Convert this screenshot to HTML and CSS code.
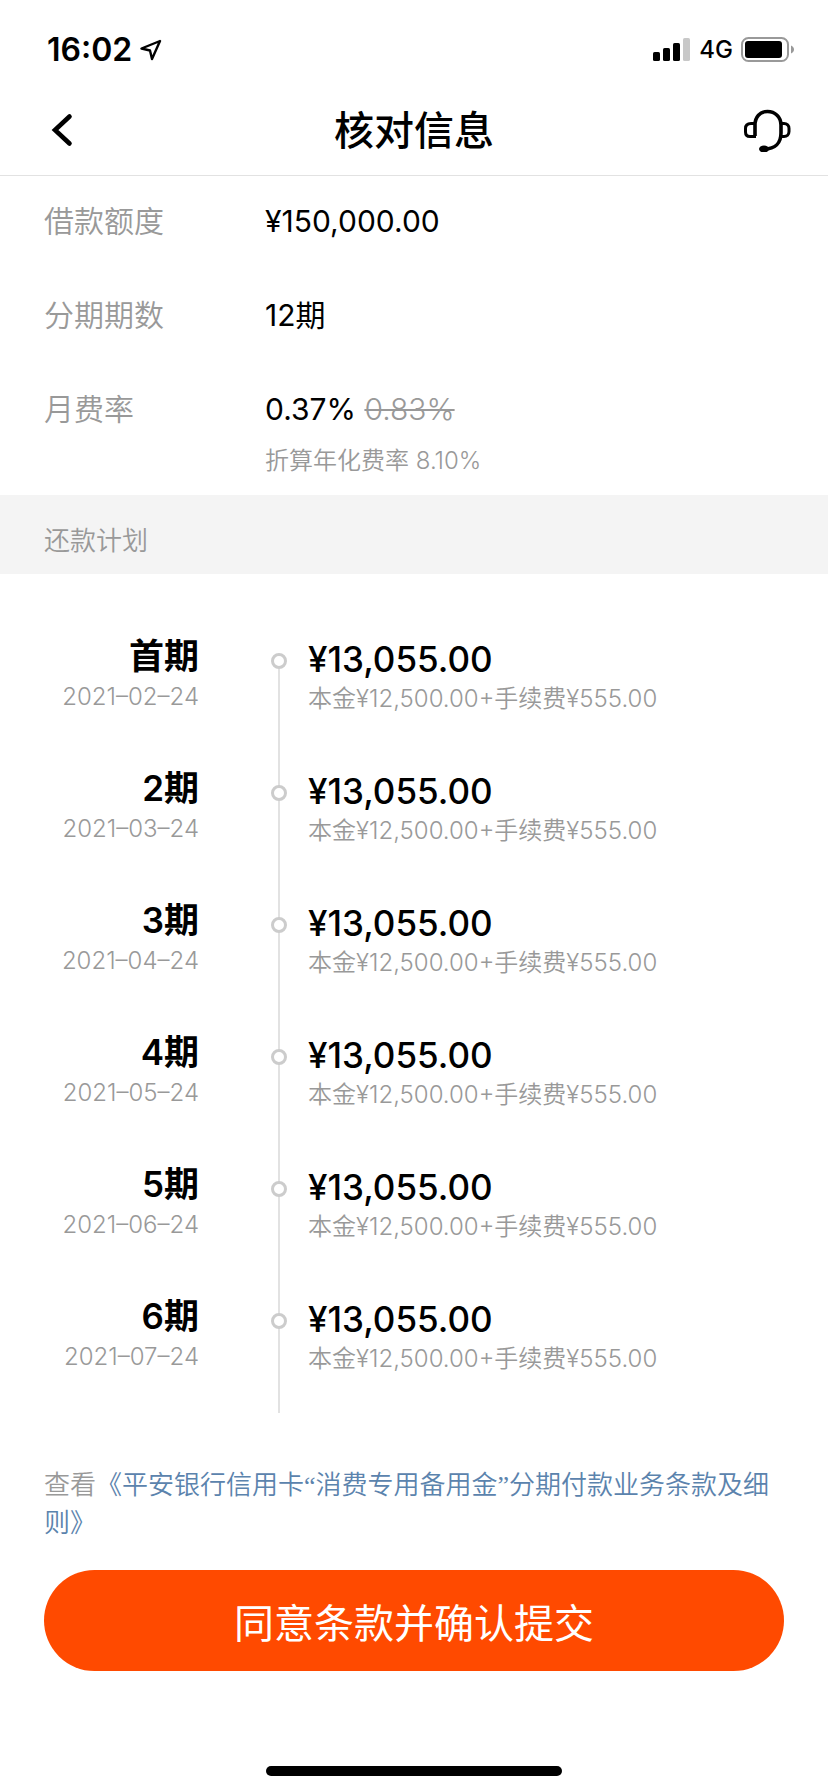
FILE: index.html
```html
<!DOCTYPE html>
<html lang="zh-CN">
<head>
    <meta charset="UTF-8">
    <meta name="viewport" content="width=device-width, initial-scale=1.0">
    <title>核对信息</title>
    <link rel="stylesheet" href="styles.css">
</head>
<body>
    <div class="status-bar">
        <div class="status-left">
            <span class="status-time">16:02</span>
            <svg class="icon-location" width="22" height="22" viewBox="0 0 22 22" fill="none" stroke="#000" stroke-width="2.4" stroke-linejoin="round"><path d="M20 2 1.500 9.500 10 11.500 12 20Z"/></svg>
        </div>
        <div class="status-right">
            <svg width="38" height="24" viewBox="0 0 38 24"><rect x="0" y="14" width="7" height="9" rx="1.6"/><rect x="10" y="10" width="7" height="13" rx="1.6"/><rect x="20" y="5" width="7" height="18" rx="1.6"/><rect x="30" y="0" width="7" height="23" rx="1.6" fill="#c8c8c8"/></svg>
            <span class="status-network">4G</span>
            <svg width="54" height="26" viewBox="0 0 54 26"><rect x="1" y="1" width="46" height="23" rx="6.5" fill="none" stroke="#999" stroke-width="2"/><rect x="4" y="4" width="37" height="17" rx="3"/><path d="M50 8.500C54 10 54 15 50 16.500Z" fill="#999"/></svg>
        </div>
    </div>

    <header class="nav-bar">
        <button class="nav-button nav-back" type="button" aria-label="返回">
            <svg width="22" height="34" viewBox="0 0 22 34" fill="none" stroke="#000" stroke-width="4.600" stroke-linecap="round" stroke-linejoin="miter"><path d="M18.500 3.500 4 17 18.500 30.500"/></svg>
        </button>
        <h1 class="nav-title">核对信息</h1>
        <button class="nav-button nav-service" type="button" aria-label="客服">
            <svg width="48" height="44" viewBox="0 0 48 44" fill="none" stroke="#000" stroke-width="3"><path d="M12 28V17C12 9 17 3.500 24.500 3.500S38 9 38 17V25C38 35 32 41 21.500 41" stroke-width="3.600"/><path d="M12 15.500H8C4.500 15.500 2.500 17.500 2.500 20.500V24C2.500 27 4.500 28.500 7 28.500H13"/><path d="M38 15.500H41C44 15.500 46 17.500 46 20.500V23.500C46 26.500 44 28.500 41 28.500H38"/><ellipse cx="21" cy="41" rx="5" ry="3.500" fill="#000" stroke="none"/></svg>
        </button>
    </header>

    <main>
        <dl class="info-list">
            <div class="info-row">
                <dt>借款额度</dt>
                <dd>¥150,000.00</dd>
            </div>
            <div class="info-row">
                <dt>分期期数</dt>
                <dd>12期</dd>
            </div>
            <div class="info-row">
                <dt>月费率</dt>
                <dd>0.37% <del>0.83%</del><p class="info-note">折算年化费率 8.10%</p></dd>
            </div>
        </dl>

        <h2 class="section-title">还款计划</h2>

        <ol class="plan-list">
            <li class="plan-item">
                <div class="plan-term"><strong>首期</strong><time datetime="2021-02-24">2021–02–24</time></div>
                <div class="plan-line"><span class="plan-dot"></span></div>
                <div class="plan-pay"><b>¥13,055.00</b><span>本金¥12,500.00+手续费¥555.00</span></div>
            </li>
            <li class="plan-item">
                <div class="plan-term"><strong>2期</strong><time datetime="2021-03-24">2021–03–24</time></div>
                <div class="plan-line"><span class="plan-dot"></span></div>
                <div class="plan-pay"><b>¥13,055.00</b><span>本金¥12,500.00+手续费¥555.00</span></div>
            </li>
            <li class="plan-item">
                <div class="plan-term"><strong>3期</strong><time datetime="2021-04-24">2021–04–24</time></div>
                <div class="plan-line"><span class="plan-dot"></span></div>
                <div class="plan-pay"><b>¥13,055.00</b><span>本金¥12,500.00+手续费¥555.00</span></div>
            </li>
            <li class="plan-item">
                <div class="plan-term"><strong>4期</strong><time datetime="2021-05-24">2021–05–24</time></div>
                <div class="plan-line"><span class="plan-dot"></span></div>
                <div class="plan-pay"><b>¥13,055.00</b><span>本金¥12,500.00+手续费¥555.00</span></div>
            </li>
            <li class="plan-item">
                <div class="plan-term"><strong>5期</strong><time datetime="2021-06-24">2021–06–24</time></div>
                <div class="plan-line"><span class="plan-dot"></span></div>
                <div class="plan-pay"><b>¥13,055.00</b><span>本金¥12,500.00+手续费¥555.00</span></div>
            </li>
            <li class="plan-item">
                <div class="plan-term"><strong>6期</strong><time datetime="2021-07-24">2021–07–24</time></div>
                <div class="plan-line"><span class="plan-dot"></span></div>
                <div class="plan-pay"><b>¥13,055.00</b><span>本金¥12,500.00+手续费¥555.00</span></div>
            </li>
        </ol>
    </main>

    <footer class="footer">
        <p class="terms">查看<a href="#">《平安银行信用卡“消费专用备用金”分期付款业务条款及细则》</a></p>
        <button class="submit-button" type="button">同意条款并确认提交</button>
        <div class="home-indicator"></div>
    </footer>
</body>
</html>
```

FILE: styles.css
```css
* { box-sizing: border-box; margin: 0; padding: 0; }
body { font-family: Inter, "Noto Sans CJK SC", sans-serif; font-size: 30px; background-color: #fff; color: #000; }
button { font-family: inherit; border: none; background: none; cursor: pointer; }

.status-bar { display: flex; justify-content: space-between; align-items: center; height: 84px; padding: 16px 33px 0 47px; }
.status-left, .status-right { display: flex; align-items: center; gap: 8px; }
.status-time { font-size: 32px; font-weight: 600; line-height: 40px; }
.status-network { font-size: 24px; font-weight: 500; line-height: 32px; }

.nav-bar { display: flex; justify-content: space-between; align-items: center; height: 92px; padding: 0 37px; border-bottom: 1px solid #e2e2e2; }
.nav-button { display: flex; width: 64px; }
.nav-back { padding-left: 14px; }
.nav-service { justify-content: flex-end; }
.nav-title { padding-top: 3px; font-size: 40px; font-weight: 500; line-height: 56px; }

.info-list { padding: 20px 44px 9px; }
.info-row { display: flex; margin-bottom: 44px; line-height: 50px; }
.info-row:last-child { margin-bottom: 0; }
.info-row dt { width: 221px; color: #999; font-weight: 350; }
.info-row del { color: #999; font-weight: 350; text-decoration-thickness: 2px; }
.info-note { padding-top: 2px; font-size: 24px; font-weight: 350; color: #999; }

.section-title { padding: 26px 44px 13px; background-color: #f4f4f4; color: #999; font-size: 26px; font-weight: 350; line-height: 40px; }

.plan-list { padding: 40px 44px 0; list-style: none; }
.plan-item { display: flex; height: 132px; }
.plan-item:last-child { height: 139px; }
.plan-term { display: flex; flex-direction: column; width: 155px; padding-top: 20px; text-align: right; }
.plan-term strong { font-size: 35px; font-weight: 600; line-height: 44px; }
.plan-term time, .plan-pay span { color: #999; font-size: 24px; font-weight: 350; line-height: 38px; }
.plan-line { display: flex; justify-content: center; width: 18px; margin: 0 20px 0 71px; padding-top: 39px; background: linear-gradient(#e2e2e2, #e2e2e2) center / 2px 100% no-repeat; }
.plan-item:first-child .plan-line { background-position: center bottom; background-size: 2px 77px; }
.plan-dot { width: 16px; height: 16px; border: 3px solid #ccc; border-radius: 50%; background-color: #fff; }
.plan-pay { display: flex; flex-direction: column; padding-top: 24px; }
.plan-pay b { font-size: 35px; font-weight: 500; line-height: 42px; }

.footer { padding: 54px 44px 16px; }
.terms { font-family: "Liberation Serif", "Noto Sans CJK SC", sans-serif; color: #999; font-size: 26px; font-weight: 350; line-height: 38px; }
.terms a { color: #5b83ad; text-decoration: none; }
.submit-button { display: block; width: 100%; height: 101px; margin-top: 27px; border-radius: 51px; background-color: #ff4a00; color: #fff; font-size: 40px; }
.home-indicator { width: 296px; height: 10px; margin: 95px auto 0; border-radius: 5px; background-color: #000; }
```
